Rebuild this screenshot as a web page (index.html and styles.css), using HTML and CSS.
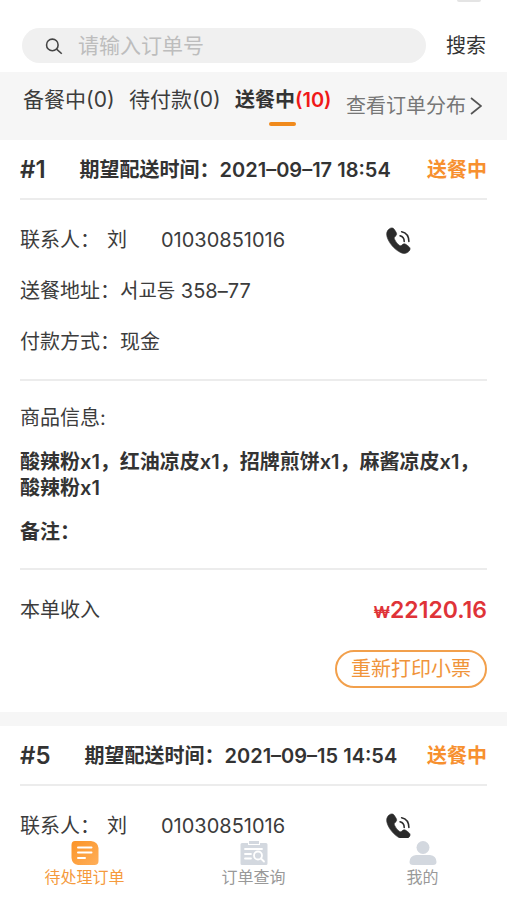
FILE: index.html
```html
<!DOCTYPE html>
<html lang="zh-CN">
<head>
<meta charset="utf-8">
<meta name="viewport" content="width=device-width, initial-scale=1">
<title>待处理订单</title>
<link rel="stylesheet" href="styles.css">
</head>
<body>
<svg class="sprite" aria-hidden="true">
  <symbol id="phone" viewBox="0 0 24 26">
    <path d="M3.2 1.8C4.8.5 6.800.5 7.900 2.200L9.700 5.100C10.700 6.800 10.200 8 8.700 9.200C7.700 10 7.700 10.800 8.400 12.200C9.500 14.400 11 16.300 12.700 17.600C13.800 18.400 14.600 18.200 15.500 17.200C16.700 16 18 15.900 19.400 16.900L22 18.900C23.500 20.100 23.500 21.700 22.200 23.200C20 25.700 16.900 26 13.900 24.500C8.100 21.700 2.700 15.400 1 9.500C.1 6.300.7 3.700 3.200 1.800Z" fill="currentColor" stroke="currentColor" stroke-width=".6"/>
    <path d="M13.500 8.500Q17.500 9.500 17.500 14M15 4.500Q22 6 22 14" fill="none" stroke="currentColor" stroke-width="1.500" stroke-linecap="round"/>
  </symbol>
</svg>
<div class="app">
  <header class="top">
    <span class="notch"></span>
    <form class="search">
      <label class="field">
        <svg class="lens" viewBox="0 0 18 18" aria-hidden="true"><g fill="none" stroke="#444" stroke-width="1.400"><circle cx="7.500" cy="8" r="5.200"/><path d="M11.300 11.800L16 16"/></g></svg>
        <input type="text" placeholder="请输入订单号" aria-label="请输入订单号">
      </label>
      <button type="button" class="go">搜索</button>
    </form>
  </header>
  <nav class="tabs">
    <a href="#" class="tab">备餐中(0)</a>
    <a href="#" class="tab">待付款(0)</a>
    <a href="#" class="tab active">送餐中<span class="count">(10)</span></a>
    <a href="#" class="map">查看订单分布<svg class="chevron" viewBox="0 0 12 18" aria-hidden="true"><path d="M1 1L11 9L1 17" fill="none" stroke="#555" stroke-width="1.700"/></svg></a>
  </nav>
  <main class="orders">
    <article class="order">
      <header class="head">
        <h2>#1</h2>
        <p>期望配送时间：2021–09–17 18:54</p>
        <span class="status">送餐中</span>
      </header>
      <section class="info">
        <div class="contact">
          <span>联系人：</span><span class="name">刘</span><span>01030851016</span>
          <a href="tel:01030851016" class="call" aria-label="拨打电话"><svg viewBox="0 0 24 26"><use href="#phone"/></svg></a>
        </div>
        <p>送餐地址：서교동 358–77</p>
        <p>付款方式：现金</p>
      </section>
      <section class="goods">
        <p>商品信息:</p>
        <p class="items">酸辣粉x1，红油凉皮x1，招牌煎饼x1，麻酱凉皮x1，酸辣粉x1</p>
        <p class="note">备注：</p>
      </section>
      <footer class="total">
        <div class="income"><span>本单收入</span><strong class="price"><span class="won">₩</span>22120.16</strong></div>
        <button type="button" class="print">重新打印小票</button>
      </footer>
    </article>
    <article class="order">
      <header class="head">
        <h2>#5</h2>
        <p>期望配送时间：2021–09–15 14:54</p>
        <span class="status">送餐中</span>
      </header>
      <section class="info">
        <div class="contact">
          <span>联系人：</span><span class="name">刘</span><span>01030851016</span>
          <a href="tel:01030851016" class="call" aria-label="拨打电话"><svg viewBox="0 0 24 26"><use href="#phone"/></svg></a>
        </div>
      </section>
    </article>
  </main>
  <nav class="bar">
    <a href="#" class="current">
      <svg viewBox="0 0 28 24" aria-hidden="true"><defs><linearGradient id="glow" x1="0" y1="0" x2="1" y2="1"><stop offset="0" stop-color="#fb9427"/><stop offset="1" stop-color="#ffaf5a"/></linearGradient></defs><path d="M4 0H20Q27 1 27.500 7V20Q27.500 24 23.500 24H7Q1 23 .5 17V4Q.5 0 4 0Z" fill="url(#glow)"/><path d="M7 6.500H20.500M7 11.500H20.500M7 17H14" stroke="#fff" stroke-width="2" stroke-linecap="round"/></svg>
      <span>待处理订单</span>
    </a>
    <a href="#">
      <svg viewBox="0 0 28 24" aria-hidden="true"><path d="M2 2H8V4H20V2H26Q27.500 2 27.500 3.500V22.500Q27.500 24 26 24H2Q.5 24 .5 22.500V3.500Q.5 2 2 2Z" fill="#d3d8df"/><path d="M9 0H19V3H9Z" fill="#d3d8df"/><path d="M5 8H22M5 13H11M5 17.500H11" stroke="#fff" stroke-width="1.800" stroke-linecap="round"/><circle cx="18" cy="14.500" r="4" fill="none" stroke="#fff" stroke-width="1.800"/><path d="M21 17.500L24 20.500" stroke="#fff" stroke-width="1.800" stroke-linecap="round"/></svg>
      <span>订单查询</span>
    </a>
    <a href="#">
      <svg viewBox="0 0 28 24" aria-hidden="true"><circle cx="14" cy="6.500" r="6.500" fill="#d3d8df"/><path d="M7 14H21Q27.500 15 27.500 21Q27.500 24 24 24H4Q.5 24 .5 21Q.5 15 7 14Z" fill="#d3d8df"/></svg>
      <span>我的</span>
    </a>
  </nav>
</div>
</body>
</html>
```
FILE: styles.css
```css
* { box-sizing: border-box; }
body, h2, p { margin: 0; }
body {
  background: #fff;
  color: #3c3c3c;
  font: 20px/28px Inter, "Noto Sans CJK SC", "Noto Sans CJK KR", sans-serif;
}
a { color: inherit; text-decoration: none; }
button, input { font: inherit; color: inherit; border: 0; background: none; padding: 0; }
.sprite { display: none; }
.app { display: flex; flex-direction: column; height: 100vh; }

.top { display: flex; flex-direction: column; flex: none; padding: 0 22px 9px; }
.notch { align-self: flex-end; width: 24px; height: 2px; margin-right: 4px; border-radius: 0 0 2px 2px; background: #e4e4e4; }
.search { display: flex; align-items: center; gap: 20px; margin-top: 26px; }
.field { display: flex; flex: 1; align-items: center; gap: 14px; height: 35px; padding: 0 22px; border-radius: 18px; background: #f0f0f0; }
.lens { flex: none; width: 20px; height: 20px; }
.field input { flex: 1; min-width: 0; font-size: 21px; outline: 0; }
.field input::placeholder { color: #bdbdbd; opacity: 1; }
.go { flex: none; height: 35px; white-space: nowrap; color: #333; }

.tabs { display: flex; flex: none; justify-content: space-between; height: 68px; padding: 14px 25px 0 23px; background: #f6f6f6; white-space: nowrap; }
.tab { height: 40px; font-size: 21px; }
.active { position: relative; font-size: 20px; font-weight: 600; color: #333; }
.active::after { content: ""; position: absolute; bottom: 0; left: calc(50% - 14px); width: 27px; height: 4px; border-radius: 2px; background: #f08a1c; }
.count { color: #f01818; }
.map { display: flex; align-items: center; gap: 4px; height: 40px; color: #777; }
.chevron { width: 12px; height: 18px; }

.orders { flex: 1; min-height: 0; overflow: hidden; }
.order { padding: 0 20px; }
.order + .order { border-top: 14px solid #f6f6f6; }
.head { display: flex; align-items: center; height: 60px; padding-top: 2px; border-bottom: 2px solid #ececec; color: #333; font-weight: 600; white-space: nowrap; }
.head h2 { margin-right: 34px; font-size: 24px; font-weight: 600; }
.status { margin-left: auto; color: #f7902f; }
.info { display: flex; flex-direction: column; gap: 23px; padding: 26px 0 23px; }
.contact { display: flex; align-items: center; height: 28px; }
.name { margin: 0 34px 0 7px; }
.call { display: flex; margin-left: auto; margin-right: 76px; color: #2b2b2b; }
.call svg { width: 25px; height: 27px; }
.goods { display: flex; flex-direction: column; gap: 17px; padding: 23px 0 22px; border: solid #ececec; border-width: 2px 0; }
.items, .note { color: #333; font-weight: 600; }
.items { line-height: 26px; }
.total { display: flex; flex-direction: column; gap: 26px; padding: 26px 0 24px; }
.income { display: flex; justify-content: space-between; height: 28px; }
.price { color: #df3338; font-size: 23px; font-weight: 600; }
.won { font-size: 16px; font-weight: 700; }
.print { align-self: flex-end; height: 38px; padding: 0 14px; border: 2px solid #f2a04c; border-radius: 19px; color: #f0943a; line-height: 32px; }

.bar { display: grid; grid-template-columns: repeat(3, 1fr); flex: none; padding: 3px 0 11px; background: #fff; color: #999; font-size: 16px; line-height: 24px; }
.bar a { display: flex; flex-direction: column; align-items: center; }
.bar svg { width: 28px; height: 24px; }
.current { color: #f59a3c; }
```
